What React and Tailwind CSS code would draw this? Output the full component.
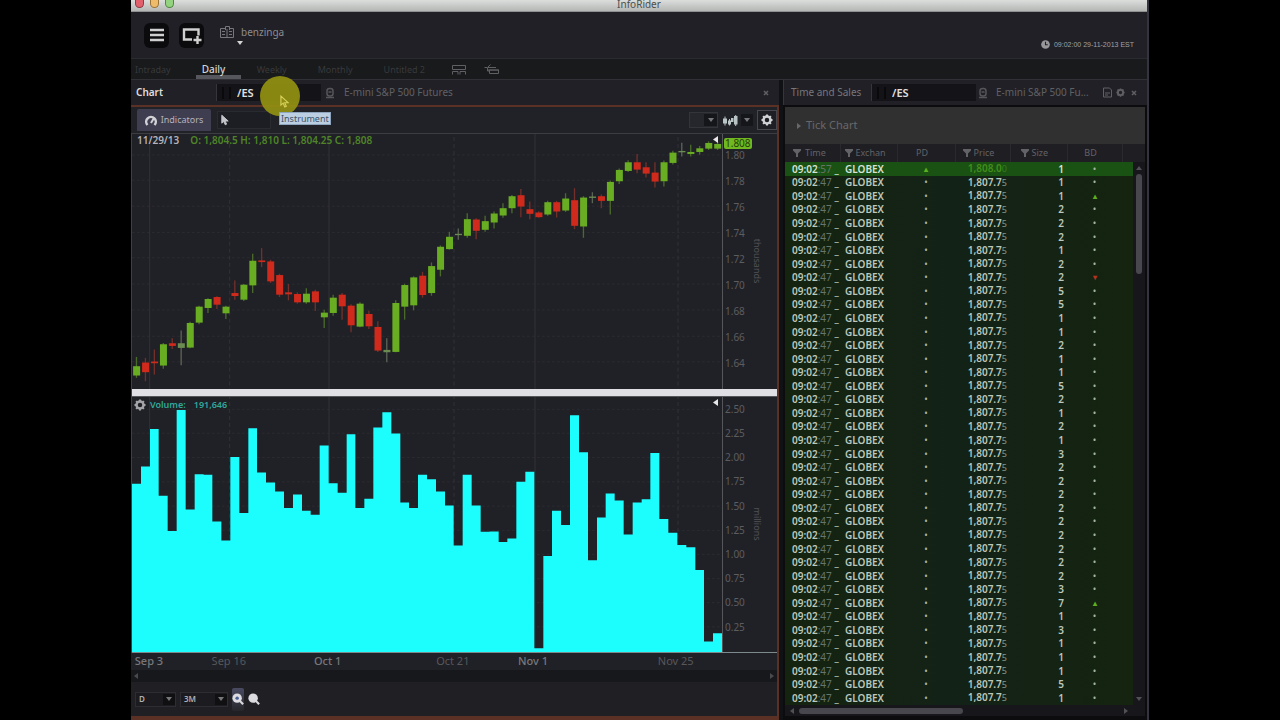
import React, { useState } from 'react';

// [body top, body bottom, high, low, direction]
const CANDLES = [
  [710, 738, 682, 745, 'up'], [699, 728, 685, 755, 'down'], [696, 701, 660, 735, 'down'],
  [644, 708, 640, 718, 'up'], [641, 649, 626, 658, 'down'], [641, 655, 603, 707, 'flat'],
  [580, 654, 576, 656, 'up'], [531, 579, 528, 584, 'up'], [508, 535, 506, 550, 'up'],
  [502, 525, 500, 538, 'down'], [531, 551, 528, 568, 'up'], [490, 499, 452, 510, 'down'],
  [465, 510, 463, 514, 'up'], [393, 467, 372, 490, 'up'], [392, 397, 355, 412, 'down'],
  [395, 455, 390, 460, 'down'], [436, 495, 432, 502, 'down'], [488, 494, 463, 512, 'down'],
  [493, 518, 488, 522, 'down'], [492, 518, 476, 522, 'up'], [485, 518, 480, 544, 'down'],
  [549, 563, 540, 595, 'up'], [504, 550, 495, 558, 'up'], [495, 530, 490, 570, 'down'],
  [528, 587, 524, 608, 'down'], [522, 591, 518, 593, 'up'], [553, 590, 543, 598, 'down'],
  [592, 663, 575, 667, 'down'], [661, 668, 626, 698, 'flat'], [520, 667, 512, 668, 'up'],
  [466, 531, 462, 570, 'up'], [443, 527, 440, 542, 'up'], [438, 496, 426, 504, 'down'],
  [409, 490, 398, 498, 'up'], [351, 420, 347, 440, 'up'], [321, 358, 306, 360, 'up'],
  [312, 316, 296, 330, 'flat'], [268, 318, 250, 324, 'up'], [269, 303, 265, 328, 'down'],
  [274, 300, 258, 306, 'up'], [251, 278, 245, 296, 'up'], [235, 257, 220, 264, 'up'],
  [199, 235, 195, 250, 'up'], [196, 230, 177, 262, 'down'], [238, 252, 215, 268, 'down'],
  [248, 262, 244, 264, 'down'], [217, 254, 213, 258, 'up'], [217, 245, 213, 263, 'down'],
  [206, 242, 190, 246, 'up'], [211, 288, 175, 298, 'down'], [203, 290, 199, 324, 'up'],
  [200, 204, 187, 220, 'flat'], [199, 213, 194, 235, 'down'], [156, 213, 152, 254, 'up'],
  [120, 154, 116, 162, 'up'], [97, 123, 91, 126, 'up'], [97, 119, 72, 130, 'down'],
  [112, 131, 97, 143, 'down'], [128, 155, 97, 173, 'down'], [97, 154, 92, 170, 'up'],
  [68, 99, 62, 104, 'up'], [63, 67, 38, 80, 'flat'], [66, 72, 44, 80, 'up'],
  [55, 66, 48, 74, 'up'], [39, 56, 34, 60, 'up'], [42, 56, 36, 60, 'up'],
];

const VOLUMES = [
  267, 215, 102, 303, 409, 45, 344, 238, 240, 380, 437, 186, 355, 100, 233, 263, 290, 340, 299, 348,
  360, 152, 265, 294, 118, 340, 312, 98, 52, 116, 323, 340, 240, 253, 290, 332, 452, 240, 332, 411,
  410, 442, 431, 261, 231, 761, 484, 348, 391, 61, 172, 497, 368, 296, 317, 419, 323, 313, 174, 373,
  414, 451, 458, 526, 741, 716,
];

const PRICE_TICKS = ['1.80', '1.78', '1.76', '1.74', '1.72', '1.70', '1.68', '1.66', '1.64'];
const VOLUME_TICKS = ['2.50', '2.25', '2.00', '1.75', '1.50', '1.25', '1.00', '0.75', '0.50', '0.25'];

const DATES = [
  { label: 'Sep 3', x: 51, major: true },
  { label: 'Sep 16', x: 291 },
  { label: 'Oct 1', x: 588, major: true },
  { label: 'Oct 21', x: 964 },
  { label: 'Nov 1', x: 1205, major: true },
  { label: 'Nov 25', x: 1634 },
];

const SIZES = [
  1, 1, 1, 2, 2, 2, 1, 2, 2, 5, 5, 1, 1, 2, 1, 1, 5, 2, 1, 2,
  1, 3, 2, 2, 2, 2, 2, 2, 2, 2, 2, 3, 7, 1, 3, 1, 1, 1, 5, 1,
];
const BD_MARKS = { 2: 'up', 8: 'down', 32: 'up' };

const PLOT_W = 1770;
const STEP = PLOT_W / CANDLES.length;
const FILL = { up: '#69ad22', down: '#cf2a1c', flat: '#6b8c50' };
const WICK = { up: '#4a6a2c', down: '#73302b', flat: '#5a6455' };

// --- Iconos ---
const Caret = ({ className = '' }) => (
  <svg viewBox="0 0 6 4" className={`h-1 w-[6px] ${className}`} fill="currentColor">
    <path d="M0 0h6L3 4z" />
  </svg>
);

const Funnel = () => (
  <svg viewBox="0 0 8 8" className="h-2 w-2 shrink-0" fill="currentColor">
    <path d="M0 0h8v1.500L5 4.500V8H3V4.500L0 1.500z" />
  </svg>
);

const Gear = ({ className = '' }) => (
  <svg viewBox="0 0 24 24" className={className} fill="none" stroke="currentColor">
    <circle cx="12" cy="12" r="7" strokeWidth="5" />
    <path
      d="M12 1v4M12 19v4M1 12h4M19 12h4M4.200 4.200l2.800 2.800M17 17l2.800 2.800M4.200 19.800L7 17M17 7l2.800-2.800"
      strokeWidth="4"
    />
  </svg>
);

const LinkIcon = () => (
  <svg viewBox="0 0 10 12" className="h-3 w-[10px] shrink-0" fill="none" stroke="currentColor">
    <rect x="2" y="1.500" width="6" height="7.500" rx="2.500" strokeWidth="1.500" />
    <path d="M1 10.500h8M3.500 5h3" strokeWidth="1.500" />
  </svg>
);

const Cross = () => (
  <svg viewBox="0 0 6 6" className="h-[6px] w-[6px]" stroke="currentColor" strokeWidth="1.500">
    <path d="M1 1l4 4M5 1L1 5" />
  </svg>
);

const Pointer = ({ className = '', fill = 'currentColor' }) => (
  <svg viewBox="0 0 10 14" className={className} fill={fill} stroke="currentColor" strokeWidth="1.200">
    <path d="M1 1v10l2.500-2.200L5.300 13l1.700-.8-1.800-3.900H9z" />
  </svg>
);

const Magnifier = ({ dot }) => (
  <svg viewBox="0 0 14 14" className="h-3 w-3">
    <path d="M9 9l4 4" stroke="#d8d8da" strokeWidth="2.500" />
    <circle cx="6" cy="6" r="5.500" fill="#dcdce0" />
    {dot && <circle cx="6" cy="6" r="2" fill="#4a5f96" />}
  </svg>
);

// --- Cabecera ---
function TitleBar() {
  return (
    <div className="relative flex h-3 shrink-0 items-start justify-center border-b border-[#8f9190] bg-linear-to-b from-[#dcdedc] to-[#b4b7b5]">
      <div className="absolute top-0 left-1 flex gap-[6px]">
        <span className="h-2 w-[9px] rounded-b-full border border-t-0 border-[#8d3b42] bg-[#e2606c]" />
        <span className="h-2 w-[9px] rounded-b-full border border-t-0 border-[#9a7336] bg-[#eebb6b]" />
        <span className="h-2 w-[9px] rounded-b-full border border-t-0 border-[#4f8843] bg-[#93d37f]" />
      </div>
      <h1 className="text-[10px] leading-[9px] text-[#4c4e4c]">InfoRider</h1>
    </div>
  );
}

function AppHeader() {
  return (
    <header className="flex h-[47px] shrink-0 items-center border-b border-[#2a2a31] bg-[#202026] px-[13px]">
      <button aria-label="Menu" className="flex h-[25px] w-[25px] items-center justify-center rounded-md bg-[#0b0b0e]">
        <svg viewBox="0 0 14 14" className="h-[14px] w-[14px]" stroke="#d0d0d0" strokeWidth="2.500">
          <path d="M0 2h14M0 7h14M0 12h14" />
        </svg>
      </button>
      <button aria-label="Add window" className="ml-[10px] flex h-[25px] w-[25px] items-center justify-center rounded-md bg-[#0b0b0e]">
        <svg viewBox="0 0 20 17" className="h-[17px] w-5" fill="none" stroke="#d0d0d0" strokeWidth="2.400">
          <path d="M10 12.500H2v-10h14.500v6M15.500 9v8M11.500 13h8" />
        </svg>
      </button>
      <svg viewBox="0 0 14 14" className="mb-[6px] ml-4 h-[14px] w-[14px]" fill="none" stroke="#77777b">
        <path d="M5 3.500H.5v9h13v-9H10M5.500 5V1.500h4V5M7 4v8M2 6.500h3M2 9.500h3M9 6.500h3M9 9.500h3" />
      </svg>
      <button className="ml-[7px] flex flex-col items-start text-[#8d8d90]">
        <span className="text-[10px] leading-3">benzinga</span>
        <Caret className="-ml-1 mt-[3px] text-[#d4d4d4]" />
      </button>
      <div className="mt-[19px] ml-auto flex items-center gap-1 text-[#a0a0a4]">
        <svg viewBox="0 0 10 10" className="h-[9px] w-[9px]">
          <circle cx="5" cy="5" r="4.800" fill="#97979b" />
          <path d="M5 2v3.300h2.500" fill="none" stroke="#202026" strokeWidth="1.200" />
        </svg>
        <time className="font-['Liberation_Sans',sans-serif] text-[7px] leading-3">
          09:02:00 29-11-2013 EST
        </time>
      </div>
    </header>
  );
}

function TabBar() {
  const [active, setActive] = useState('Daily');
  const tabs = ['Intraday', 'Daily', 'Weekly', 'Monthly', 'Untitled 2'];
  return (
    <nav className="flex h-[21px] shrink-0 items-stretch border-b border-[#303036] bg-[#191a1c] pl-1">
      {tabs.map((tab) => (
        <button
          key={tab}
          onClick={() => setActive(tab)}
          className={
            tab === active
              ? 'mr-4 ml-[25px] flex w-[45px] items-center border-b-4 border-[#56565d] pt-1 pl-[6px] text-[10px] leading-3 font-medium text-[#d4d4d4]'
              : 'mr-[31px] flex items-center pt-[2px] text-[9px] text-[#38393b] first:mr-0'
          }
        >
          {tab}
        </button>
      ))}
      <button aria-label="Split layout" className="-ml-1 mr-[18px] pt-[1px] text-[#606064]">
        <svg viewBox="0 0 14 10" className="h-[10px] w-[14px]" fill="none" stroke="currentColor">
          <path d="M.5.500h13v4H.5zM.5 9.500v-3h5.500v3M8 9.500v-3h5.500v3" />
        </svg>
      </button>
      <button aria-label="Share layout" className="pt-[1px] text-[#606064]">
        <svg viewBox="0 0 16 11" className="h-[11px] w-4" fill="none" stroke="currentColor">
          <path d="M3 3.500H.5M12 3.500H3.500l3-3M5.500 6h9v3.500h-9zM4 6h11M3.500 4v3h2" />
        </svg>
      </button>
    </nav>
  );
}

function InstrumentField({ id }) {
  return (
    <label htmlFor={id} className="flex h-[17px] w-[104px] items-center bg-[#141418]">
      <span className="ml-[5px] h-3 w-[9px] border-x-2 border-[#0a0a0c]" />
      <input
        id={id}
        aria-label="Instrument"
        defaultValue="/ES"
        className="ml-[6px] w-16 bg-transparent text-[11px] leading-4 font-semibold text-[#e0e0e0] outline-none"
      />
    </label>
  );
}

// --- Panel del grafico ---
function GridLines({ rows }) {
  return (
    <g stroke="#303136" strokeWidth="3">
      {rows.map((y) => (
        <path key={y} d={`M0 ${y}H${PLOT_W}`} strokeDasharray="8 7" stroke="#2a2b30" />
      ))}
      {[53, 591, 1209].map((x) => (
        <path key={x} d={`M${x} 0V780`} />
      ))}
      {[293, 966, 1638].map((x) => (
        <path key={x} d={`M${x} 0V780`} strokeDasharray="12 9" />
      ))}
    </g>
  );
}

function AxisLabels({ ticks, unit, children }) {
  return (
    <div className="relative flex w-[55px] shrink-0 border-l border-[#55565a] text-[10px] leading-3 text-[#5c5d60]">
      {children}
      <span className="absolute top-1/2 right-[14px] -translate-y-1/2 text-[9px] leading-3 text-[#505155] [writing-mode:vertical-rl]">
        {unit}
      </span>
      {ticks}
    </div>
  );
}

function PriceChart() {
  const rows = [75, 151, 229, 308, 384, 463, 541, 620, 697];
  return (
    <section className="flex min-h-0 flex-[255] basis-0 border-t border-[#3c3c42]">
      <div className="relative min-w-0 flex-1">
        <svg viewBox={`0 12 ${PLOT_W} 765`} preserveAspectRatio="none" className="absolute inset-0 h-full w-full">
          <GridLines rows={rows} />
          {CANDLES.map(([top, bottom, high, low, dir], i) => {
            const cx = (i + 0.5) * STEP;
            return (
              <g key={i}>
                <path d={`M${cx} ${high}V${low}`} stroke={WICK[dir]} strokeWidth="4" />
                <rect x={cx - 10} y={top} width="21" height={bottom - top} fill={FILL[dir]} />
              </g>
            );
          })}
        </svg>
        <p className="absolute top-0 left-[5px] flex gap-[11px] text-[10px] leading-3 font-semibold whitespace-nowrap">
          <span className="text-[#b4b4bc]">11/29/13</span>
          <span className="text-[#4f8528]">O: 1,804.5 H: 1,810 L: 1,804.25 C: 1,808</span>
        </p>
        <svg viewBox="0 0 5 7" className="absolute top-[2px] right-1 h-[7px] w-[5px]" fill="#e8e8e8">
          <path d="M5 0v7L0 3.500z" />
        </svg>
      </div>
      <AxisLabels
        unit="thousands"
        ticks={
          <div className="flex flex-col pl-[2px]">
            <span className="flex-[8] basis-0" />
            {PRICE_TICKS.map((t) => (
              <span key={t} className="flex flex-[26] basis-0 items-center">{t}</span>
            ))}
            <span className="flex-[13] basis-0" />
          </div>
        }
      >
        <span className="absolute top-1 left-[1px] rounded-xs bg-[#70b81f] px-[1px] text-[10px] leading-[11px] text-[#233d08]">
          1.808
        </span>
      </AxisLabels>
    </section>
  );
}

function VolumeChart() {
  const rows = [43, 115, 188, 261, 334, 407, 479, 552, 624, 697];
  const outline = VOLUMES.map((v, i) => `V${v}H${((i + 1) * STEP).toFixed(0)}`).join('');
  return (
    <section className="flex min-h-0 flex-[256] basis-0 border-b border-[#7c8a8c]">
      <div className="relative min-w-0 flex-1">
        <svg viewBox={`0 6 ${PLOT_W} 768`} preserveAspectRatio="none" className="absolute inset-0 h-full w-full">
          <GridLines rows={rows} />
          <path d={`M0 774${outline}V774z`} fill="#1cfdfe" />
        </svg>
        <div className="absolute top-[2px] left-[2px] flex items-center text-[9px] leading-3 font-semibold whitespace-nowrap text-[#2fa99b]">
          <button aria-label="Volume settings" className="mr-1">
            <Gear className="h-3 w-3 text-[#a4a4a8]" />
          </button>
          <span className="mr-2">Volume:</span>
          <span>191,646</span>
        </div>
        <svg viewBox="0 0 5 7" className="absolute top-[2px] right-1 h-[7px] w-[5px]" fill="#e8e8e8">
          <path d="M5 0v7L0 3.500z" />
        </svg>
      </div>
      <AxisLabels
        unit="millions"
        ticks={
          <div className="flex flex-col pl-[2px]">
            {VOLUME_TICKS.map((t) => (
              <span key={t} className="flex flex-[24] basis-0 items-center">{t}</span>
            ))}
            <span className="flex-[13] basis-0" />
          </div>
        }
      />
    </section>
  );
}

function FooterSelect({ label, value, className }) {
  return (
    <label className={`relative flex h-[15px] items-center border border-[#2d2d33] bg-[#1b1b20] ${className}`}>
      <select aria-label={label} className="h-full w-full appearance-none pl-[3px] text-[8px] leading-3 font-semibold text-[#b0b0b4]">
        <option>{value}</option>
      </select>
      <span className="pointer-events-none absolute right-0 flex h-[11px] w-3 items-center justify-center bg-[#101013] text-[#77777b]">
        <Caret />
      </span>
    </label>
  );
}

function ChartPanel() {
  return (
    <section className="flex min-w-0 flex-1 flex-col bg-[#202126]">
      <div className="flex h-[25px] shrink-0 items-center bg-[#202026] pl-[5px] text-[10px] text-[#606064]">
        <h2 className="w-20 font-semibold text-[#dedede]">Chart</h2>
        <div className="relative border-l border-[#35353b]">
          <InstrumentField id="chart-instrument" />
          <span className="absolute -top-2 left-[43px] z-10 flex h-10 w-10 items-center justify-center rounded-full bg-[#959312]/90">
            <Pointer className="mt-[10px] ml-2 h-[13px] w-[9px] text-[#d8d25a]" fill="#8f8d14" />
          </span>
          <span role="tooltip" className="absolute top-7 left-[62px] z-10 border border-[#8ea5bd] bg-[#bccfe2] px-[1px] text-[9px] leading-[11px] text-[#3e5468]">
            Instrument
          </span>
        </div>
        <span className="ml-1 text-[#56565a]"><LinkIcon /></span>
        <span className="ml-[9px] truncate">E-mini S&amp;P 500 Futures</span>
        <button aria-label="Close chart" className="mr-[10px] ml-auto"><Cross /></button>
      </div>

      <div className="flex min-h-0 flex-1 flex-col border-t-2 border-r-2 border-b-4 border-[#5b3025]">
        <div className="flex h-[26px] shrink-0 items-center bg-[#202228] pl-[6px]">
          <button className="flex h-[22px] w-[74px] items-center justify-center gap-1 rounded-t-xs bg-[#3f3d50] text-[9px] text-[#b4b4bf]">
            <svg viewBox="0 0 12 11" className="h-[11px] w-3" fill="none">
              <path d="M2.500 10a4.800 4.800 0 1 1 7 0" stroke="#d0d0d6" strokeWidth="2.500" />
              <path d="M9 3L6 8" stroke="#d0d0d6" strokeWidth="2" />
            </svg>
            Indicators
          </button>
          <button aria-label="Pointer tool" className="ml-[6px] flex h-[18px] w-[54px] items-center border border-[#2a2a31] bg-[#1d1e23] pl-[3px]">
            <Pointer className="h-3 w-2 text-[#c4c4cb]" />
          </button>
          <button aria-label="Drawing style" className="mr-1 ml-auto flex h-4 w-[29px] items-center justify-end border border-[#34353a] bg-[#25272c]">
            <span className="flex h-3 w-[13px] items-center justify-center bg-[#15161a] text-[#77777b]"><Caret /></span>
          </button>
          <button aria-label="Chart type" className="mr-1 flex h-4 w-[31px] items-center justify-between">
            <svg viewBox="0 0 15 11" className="ml-[1px] h-[11px] w-[15px]" fill="#b9c4c4">
              <path d="M0 3.500h4v5H0zM5 5.500h3v4H5zM8 3h2.500v4H8zM11 1h3.500v8.500H11z" />
              <path d="M1.500 1.500h1v9h-1zM6 4h1v6.500H6zM12.200 0h1v11h-1z" />
            </svg>
            <span className="flex h-3 w-3 items-center justify-center bg-[#15161a] text-[#77777b]"><Caret /></span>
          </button>
          <button aria-label="Chart settings" className="flex h-5 w-5 items-center justify-center border border-[#47484e] bg-[#1d1f24]">
            <Gear className="h-3 w-3 text-[#cfd2d4]" />
          </button>
        </div>

        <div className="flex min-h-0 flex-1 flex-col border-l border-[#3f4044]">
          <PriceChart />
          <div className="h-2 shrink-0 border-b border-[#55565a] bg-[#dfdfe4]" />
          <VolumeChart />
        </div>

        <div className="relative mr-14 ml-[1px] h-[17px] shrink-0 text-[11px] leading-4">
          {DATES.map((d) => (
            <span
              key={d.label}
              style={{ left: `${(d.x / PLOT_W) * 100}%` }}
              className={`absolute -translate-x-1/2 whitespace-nowrap ${d.major ? 'font-medium text-[#77787c]' : 'text-[#57585c]'}`}
            >
              {d.label}
            </span>
          ))}
        </div>
        <div className="flex h-3 shrink-0 items-center justify-between bg-[#17181b] px-[2px] text-[#4a4a4e]">
          <Caret className="rotate-90" />
          <Caret className="-rotate-90" />
        </div>
        <div className="flex h-[34px] shrink-0 items-center bg-[#1f1f24] pl-1">
          <FooterSelect label="Interval" value="D" className="w-[41px]" />
          <FooterSelect label="Range" value="3M" className="ml-1 w-12" />
          <button aria-label="Zoom out" className="ml-1 flex h-[23px] items-center rounded-xs bg-linear-to-b from-[#4a4b63] to-[#26262b]"><Magnifier dot /></button>
          <button aria-label="Zoom in" className="ml-1"><Magnifier /></button>
        </div>
      </div>
    </section>
  );
}

// --- Panel de Time and Sales ---
const Mark = ({ kind }) => {
  if (kind === 'up') return <span className="text-[#5fae1e]">▴</span>;
  if (kind === 'down') return <span className="text-[#b53222]">▾</span>;
  return <span className="text-[#a5b5a5]">•</span>;
};

function TradesTable() {
  const th = 'h-[18px] border-r border-[#29292e] p-0 font-normal';
  return (
    <table className="h-full w-full table-fixed border-collapse text-[10px] leading-3">
      <colgroup>
        <col className="w-[55px]" />
        <col className="w-[57px]" />
        <col className="w-[58px]" />
        <col className="w-[55px]" />
        <col className="w-[57px]" />
        <col className="w-[55px]" />
        <col />
      </colgroup>
      <thead className="bg-[#1e1e23] text-[9px] text-[#626267]">
        <tr>
          <th className={th}><span className="flex items-center gap-1 pl-2"><Funnel />Time</span></th>
          <th className={th}><span className="flex items-center gap-[3px] pl-1"><Funnel />Exchan</span></th>
          <th className={`${th} pr-2`}>PD</th>
          <th className={th}><span className="flex items-center gap-[3px] pl-[7px]"><Funnel />Price</span></th>
          <th className={th}><span className="flex items-center gap-[3px] pl-[10px]"><Funnel />Size</span></th>
          <th className={`${th} pr-2`}>BD</th>
          <th className="p-0" aria-label="More" />
        </tr>
      </thead>
      <tbody className="font-semibold text-[#bcc8bc]">
        {SIZES.map((size, i) => (
          <tr key={i} className={i === 0 ? 'bg-[#1a5213] text-[#d6e2d6]' : 'bg-linear-to-r from-[#15240f] via-[#132217] to-[#15240f]'}>
            <td className="p-0 pl-[7px] whitespace-nowrap">
              09:02<span className="font-normal text-[#66756a]">:{i === 0 ? '57' : '47'}</span> _
            </td>
            <td className="p-0 pl-[5px]">GLOBEX</td>
            <td className="p-0 text-center text-[8px] leading-3">{i === 0 ? <Mark kind="up" /> : <Mark />}</td>
            <td className={`p-0 pr-[3px] text-right ${i === 0 ? 'text-[#438e1a]' : ''}`}>
              {i === 0 ? '1,808.0' : '1,807.7'}
              <span className="text-[9px] font-normal opacity-70">{i === 0 ? '0' : '5'}</span>
            </td>
            <td className="p-0 pr-[3px] text-right">{size}</td>
            <td className="p-0 text-center text-[8px] leading-3"><Mark kind={BD_MARKS[i]} /></td>
            <td className="p-0" />
          </tr>
        ))}
      </tbody>
    </table>
  );
}

function SalesPanel() {
  return (
    <section className="flex w-[364px] shrink-0 flex-col bg-[#101114]">
      <div className="flex h-[25px] shrink-0 items-center border-l border-[#35353b] bg-[#202026] pl-[7px] text-[10px] text-[#606064]">
        <h2 className="w-[80px] text-[#77777b]">Time and Sales</h2>
        <div className="border-l border-[#35353b]">
          <InstrumentField id="sales-instrument" />
        </div>
        <span className="ml-[2px] text-[#56565a]"><LinkIcon /></span>
        <span className="ml-2 whitespace-nowrap">E-mini S&amp;P 500 Fu...</span>
        <div className="mr-[10px] ml-auto flex items-center gap-[3px]">
          <button aria-label="Export">
            <svg viewBox="0 0 11 11" className="h-[11px] w-[11px]" fill="none" stroke="currentColor">
              <path d="M1.500 1h6l2 2v7h-8zM3 6h5M3 8h3" />
            </svg>
          </button>
          <button aria-label="Settings"><Gear className="h-[9px] w-[9px]" /></button>
          <button aria-label="Close" className="ml-[3px]"><Cross /></button>
        </div>
      </div>

      <div className="flex min-h-0 flex-1 flex-col border-t-2 border-r-2 border-b-4 border-l-2 border-[#0c0c0e]">
        <button className="flex h-[37px] shrink-0 items-center gap-1 bg-[#303031] pl-[11px] text-[11px] text-[#68686a]">
          <Caret className="-rotate-90" />
          Tick Chart
        </button>
        <div className="flex min-h-0 flex-1">
          <div className="min-w-0 flex-1"><TradesTable /></div>
          <div className="flex w-3 shrink-0 flex-col items-center bg-[#17171b] text-[#505055]">
            <span className="h-[18px] w-full bg-[#1e1e23]" />
            <Caret className="my-1 rotate-180" />
            <span className="h-[100px] w-[6px] rounded-full bg-[#47474d]" />
            <Caret className="mt-auto mb-1" />
          </div>
        </div>
        <div className="flex h-[11px] shrink-0 items-center bg-[#17171b] px-1 text-[#505055]">
          <Caret className="rotate-90" />
          <span className="ml-1 h-[6px] w-[164px] rounded-full bg-[#47474d]" />
          <Caret className="mr-3 ml-auto -rotate-90" />
        </div>
      </div>
    </section>
  );
}

export default function App() {
  return (
    <div className="flex h-screen justify-center overflow-hidden bg-black px-[131px] font-['Noto_Sans','Open_Sans',sans-serif]">
      <main className="flex min-w-0 flex-1 flex-col border-r-2 border-[#34343f] bg-[#101114]">
        <TitleBar />
        <AppHeader />
        <TabBar />
        <div className="flex min-h-0 flex-1 gap-1">
          <ChartPanel />
          <SalesPanel />
        </div>
      </main>
    </div>
  );
}
